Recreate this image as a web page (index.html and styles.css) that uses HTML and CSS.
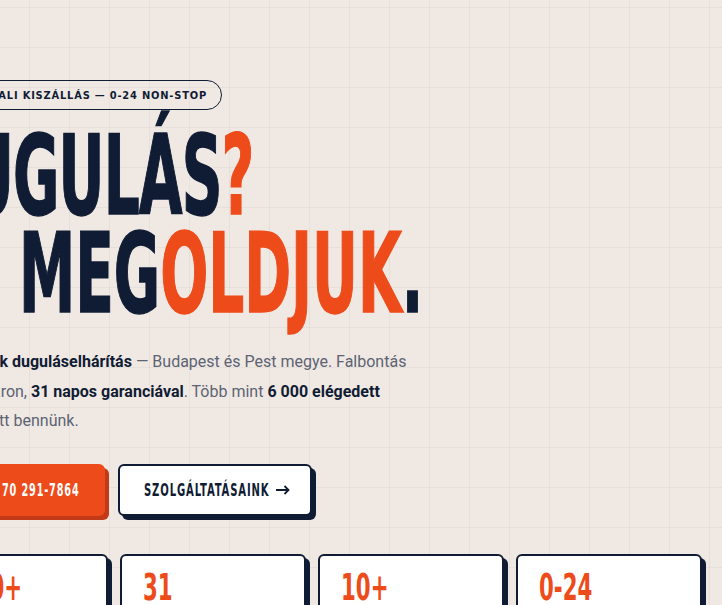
FILE: index.html
```html
<!DOCTYPE html>
<html lang="hu">
<head>
<meta charset="utf-8">
<title>Duguláselhárítás</title>
<link rel="stylesheet" href="styles.css">
</head>
<body>
<main class="hero">
  <div class="badge"><span class="badge-dot"></span><span class="badge-text">AZONNALI KISZÁLLÁS — 0-24 NON-STOP</span></div>
  <h1 class="title">
    <span class="line line-1"><span class="cond">DUGULÁS<em>?</em></span></span>
    <span class="line line-2"><span class="cond">MI MEG<em>OLDJUK</em>.</span></span>
  </h1>
  <p class="lead"><strong>A csatornák duguláselhárítás</strong> — Budapest és Pest megye. Falbontás<br>nélkül, fix áron, <strong>31 napos garanciával</strong>. Több mint <strong>6 000 elégedett</strong><br>ügyfél bízott bennünk.</p>
  <div class="actions">
    <a class="btn btn-primary" href="#"><span class="cond">+36 70 291-7864</span></a>
    <a class="btn btn-secondary" href="#"><span class="cond">SZOLGÁLTATÁSAINK</span><svg class="arrow" width="14" height="10" viewBox="0 0 14 10" aria-hidden="true"><path d="M0 5H12.5M8.5 1L12.5 5L8.5 9" fill="none" stroke="currentColor" stroke-width="1.8"/></svg></a>
  </div>
  <div class="stats">
    <div class="stat"><div class="stat-num"><span class="cond">6000+</span></div><div class="stat-label">elégedett ügyfél</div></div>
    <div class="stat"><div class="stat-num"><span class="cond">31</span></div><div class="stat-label">napos garancia</div></div>
    <div class="stat"><div class="stat-num"><span class="cond">10+</span></div><div class="stat-label">év tapasztalat</div></div>
    <div class="stat"><div class="stat-num"><span class="cond">0-24</span></div><div class="stat-label">órás ügyelet</div></div>
  </div>
</main>
</body>
</html>
```

FILE: styles.css
```css
html, body {
  margin: 0;
  height: 605px;
}
body {
  overflow: hidden;
  background-color: #f0e9e3;
  background-image:
    linear-gradient(to right, rgba(16, 28, 52, 0.045) 1px, transparent 1px),
    linear-gradient(to bottom, rgba(16, 28, 52, 0.045) 1px, transparent 1px);
  background-size: 40px 40px;
  background-position: 29px 7px;
  color: #101c34;
  font-family: Roboto, "Liberation Sans", sans-serif;
}
.hero {
  width: 780px;
  margin-left: -78px;
  padding-top: 80px;
}
.badge {
  display: flex;
  align-items: center;
  justify-content: flex-end;
  gap: 8px;
  width: 300px;
  height: 30px;
  box-sizing: border-box;
  border: 1.5px solid #101c34;
  border-radius: 15px;
  padding-right: 14px;
  font: 700 11px/1 "DejaVu Sans Condensed", "DejaVu Sans", sans-serif;
  letter-spacing: 0.8px;
  color: #101c34;
  white-space: nowrap;
}
.badge-text {
  flex: none;
}
.badge-dot {
  flex: none;
  width: 6px;
  height: 6px;
  border-radius: 50%;
  background: #ee4b1b;
}
.title {
  margin: 17px 0 0;
  font-family: "DejaVu Sans Condensed", "DejaVu Sans", sans-serif;
  font-weight: 700;
  font-size: 110px;
  line-height: 98px;
  color: #101c34;
}
.title em {
  font-style: normal;
  color: #ee4b1b;
}
.line {
  display: block;
  white-space: nowrap;
}
.line-1 {
  letter-spacing: -1.5px;
}
.cond {
  display: inline-block;
  white-space: nowrap;
  transform-origin: left center;
}
.title .cond {
  transform: scaleX(0.571);
  -webkit-text-stroke-width: 1.5px;
}
.lead {
  margin: 24px 0 0;
  font: 400 16px/29.5px Roboto, sans-serif;
  color: #5c6373;
}
.lead strong {
  color: #101c34;
  font-weight: 700;
}
.actions {
  display: flex;
  gap: 13px;
  margin-top: 28px;
}
.btn {
  height: 52px;
  box-sizing: border-box;
  border-radius: 6px;
  display: flex;
  align-items: center;
  justify-content: center;
  text-decoration: none;
  font: 700 18px/1 "DejaVu Sans Condensed", "DejaVu Sans", sans-serif;
  letter-spacing: 1.4px;
}
.btn-primary {
  width: 183px;
  justify-content: flex-end;
  padding-right: 25px;
  background: #ee4b1b;
  color: #fff;
  box-shadow: 4px 4px 0 #c23a17;
}
.btn-primary .cond {
  transform: scaleX(0.6);
  transform-origin: right center;
}
.btn-secondary {
  width: 194px;
  padding: 0 24px;
  justify-content: flex-start;
  background: #fff;
  border: 2px solid #101c34;
  color: #101c34;
  box-shadow: 4px 4px 0 #101c34;
}
.btn-secondary .cond {
  transform: scaleX(0.62);
  margin-right: -75px;
}
.arrow {
  flex: none;
  margin-left: 5px;
}
.stats {
  display: grid;
  grid-template-columns: repeat(4, 1fr);
  gap: 12px;
  margin-top: 38px;
}
.stat {
  background: #fff;
  border: 2px solid #101c34;
  border-radius: 6px;
  box-shadow: 4px 4px 0 #101c34;
  padding: 13px 21px 18px;
}
.stat-num {
  font: 700 37px/1 "DejaVu Sans Condensed", "DejaVu Sans", sans-serif;
  color: #ee4b1b;
}
.stat-num .cond {
  transform: scaleX(0.64);
}
.stat-label {
  margin-top: 8px;
  font: 500 14px/1.4 Roboto, sans-serif;
  color: #5c6373;
}
```
